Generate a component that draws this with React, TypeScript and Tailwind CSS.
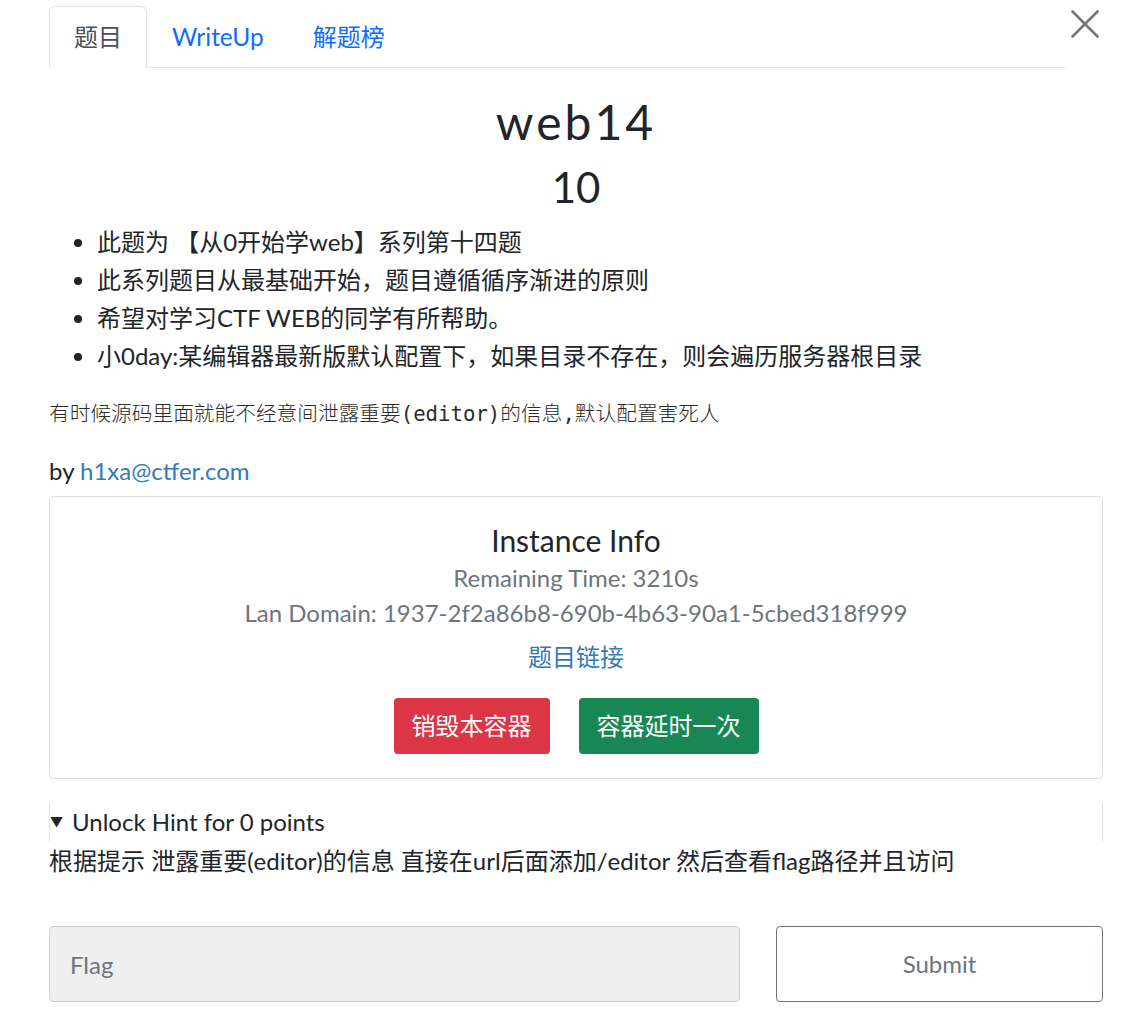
import { X } from 'lucide-react';

const body = '[font-family:Lato,"Noto_Sans_CJK_SC",sans-serif]';

function Tabs() {
  return (
    <div className="flex items-start pt-[6px]">
      <ul className="flex flex-1 items-end border-b border-[#dee2e6] text-[24px] leading-[33px]">
        <li className="-mb-px rounded-t-[6px] border border-b-white border-[#dee2e6] bg-white px-[24px] pb-[14px] pt-[13px] text-[#495057]">
          题目
        </li>
        <li className="px-[25px] pb-[14px] pt-[13px] text-[24.5px] text-[#0d6efd]">WriteUp</li>
        <li className="px-[24px] pb-[14px] pt-[13px] text-[#0d6efd]">解题榜</li>
      </ul>
      <button className="ml-[2px] flex h-[36px] w-[36px] items-center justify-center text-[#777]">
        <X size={50} strokeWidth={1.3} className="shrink-0" />
      </button>
    </div>
  );
}

function InstanceCard() {
  return (
    <div className="mt-[9px] flex flex-col items-center rounded-[4px] border border-[#dfdfdf] pb-[24px] pt-[25px] text-center">
      <div className="text-[30px] leading-[36px] text-[#212529]">Instance Info</div>
      <div className="mt-[3px] text-[24px] leading-[34px] text-[#6c757d]">Remaining Time: 3210s</div>
      <div className="mt-px text-[24px] leading-[34px] text-[#6c757d]">
        Lan Domain: 1937-2f2a86b8-690b-4b63-90a1-5cbed318f999
      </div>
      <a className="mt-[10px] text-[24px] leading-[34px] text-[#337ab7]">题目链接</a>
      <div className="mt-[24px] flex gap-[29px]">
        <button className="h-[56px] rounded-[4px] bg-[#dc3545] px-[18px] text-[24px] text-white">
          销毁本容器
        </button>
        <button className="h-[56px] rounded-[4px] bg-[#198754] px-[18px] text-[24px] text-white">
          容器延时一次
        </button>
      </div>
    </div>
  );
}

export default function App() {
  return (
    <div className={`min-h-screen bg-white pl-[49px] pr-[39px] text-[#212529] ${body}`}>
      <Tabs />

      <div className="mt-[24px] text-center text-[48px] leading-[60px] tracking-[3px]">web14</div>
      <div className="mt-[9px] text-center text-[42px] leading-[52px]">10</div>

      <ul className="mt-[10px] list-disc pl-[48px] text-[24px] leading-[38px]">
        <li>此题为 【从0开始学web】系列第十四题</li>
        <li>此系列题目从最基础开始，题目遵循循序渐进的原则</li>
        <li>希望对学习CTF WEB的同学有所帮助。</li>
        <li>小0day:某编辑器最新版默认配置下，如果目录不存在，则会遍历服务器根目录</li>
      </ul>

      <p className='mt-[24px] text-[20.7px] leading-[30px] text-[#2b2b2b] [font-family:"DejaVu_Sans_Mono","Noto_Sans_CJK_SC",monospace] font-light'>
        有时候源码里面就能不经意间泄露重要(editor)的信息,默认配置害死人
      </p>

      <p className="mt-[25px] text-[24px] leading-[33px]">
        by <a className="text-[#337ab7]">h1xa@ctfer.com</a>
      </p>

      <InstanceCard />

      <div className="mt-[24px] flex h-[38px] items-center border-x border-[#e3e3e3] text-[24px]">
        <span className="mr-[9px] text-[13px]">▼</span>
        <span>Unlock Hint for 0 points</span>
      </div>
      <p className="mt-[3px] text-[24px] leading-[34px]">
        根据提示 泄露重要(editor)的信息 直接在url后面添加/editor 然后查看flag路径并且访问
      </p>

      <div className="mt-[48px] flex gap-[36px]">
        <input
          placeholder="Flag"
          className="h-[76px] flex-1 rounded-[4px] border border-[#cfcfcf] bg-[#efefef] px-[20px] text-[24px] outline-none placeholder:text-[#6c757d]"
        />
        <button className="h-[76px] w-[327px] rounded-[4px] border border-[#6c757d] bg-white text-[24px] text-[#6c757d]">
          Submit
        </button>
      </div>
    </div>
  );
}
